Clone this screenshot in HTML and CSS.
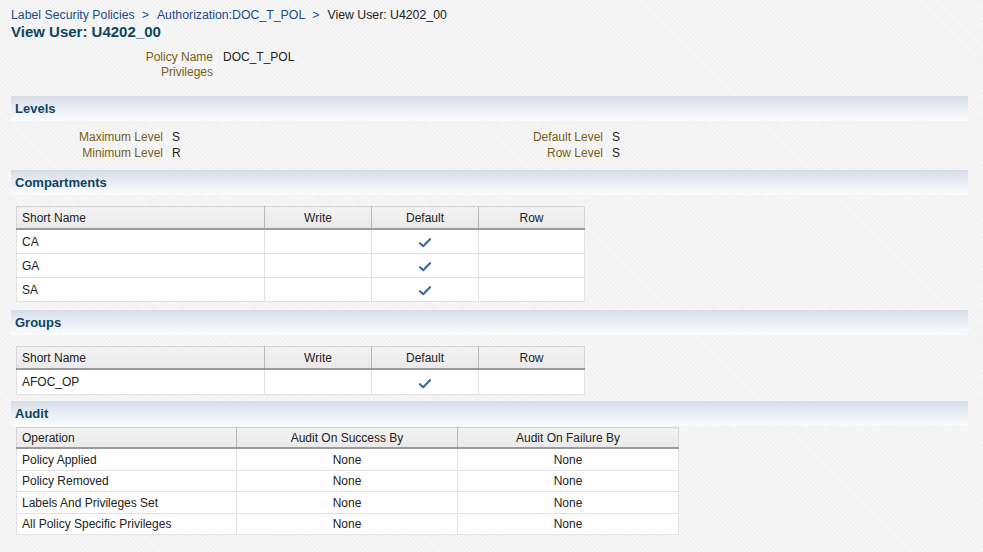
FILE: index.html
```html
<!DOCTYPE html>
<html>
<head>
<meta charset="utf-8">
<title>View User: U4202_00</title>
<link rel="stylesheet" href="styles.css">
</head>
<body>
<div class="page">
  <div class="crumbs">
    <a class="crumb-link" href="#">Label Security Policies</a><span class="sep">&gt;</span><a class="crumb-link" href="#">Authorization:DOC_T_POL</a><span class="sep">&gt;</span><span class="crumb-current">View User: U4202_00</span>
  </div>
  <h1 class="title">View User: U4202_00</h1>

  <div class="policy-form">
    <div class="label">Policy Name</div><div class="value">DOC_T_POL</div>
    <div class="label">Privileges</div><div class="value"></div>
  </div>

  <div class="section-header">Levels</div>
  <div class="levels">
    <div class="label">Maximum Level</div><div class="value">S</div>
    <div class="label">Default Level</div><div class="value">S</div>
    <div class="label">Minimum Level</div><div class="value">R</div>
    <div class="label">Row Level</div><div class="value">S</div>
  </div>

  <div class="section-header">Compartments</div>
  <table class="grid grid-comp">
    <colgroup><col class="c-name"><col class="c-flag"><col class="c-flag"><col class="c-row"></colgroup>
    <thead><tr><th class="left">Short Name</th><th>Write</th><th>Default</th><th>Row</th></tr></thead>
    <tbody>
      <tr><td>CA</td><td></td><td class="center"><svg class="check" width="12" height="10" viewBox="0 0 12 10"><path d="M1 5.2 L4.2 8.2 L11 1.2" fill="none" stroke="#3b6a9a" stroke-width="2.2" stroke-linecap="round" stroke-linejoin="round"/></svg></td><td></td></tr>
      <tr><td>GA</td><td></td><td class="center"><svg class="check" width="12" height="10" viewBox="0 0 12 10"><path d="M1 5.2 L4.2 8.2 L11 1.2" fill="none" stroke="#3b6a9a" stroke-width="2.2" stroke-linecap="round" stroke-linejoin="round"/></svg></td><td></td></tr>
      <tr><td>SA</td><td></td><td class="center"><svg class="check" width="12" height="10" viewBox="0 0 12 10"><path d="M1 5.2 L4.2 8.2 L11 1.2" fill="none" stroke="#3b6a9a" stroke-width="2.2" stroke-linecap="round" stroke-linejoin="round"/></svg></td><td></td></tr>
    </tbody>
  </table>

  <div class="section-header">Groups</div>
  <table class="grid grid-comp">
    <colgroup><col class="c-name"><col class="c-flag"><col class="c-flag"><col class="c-row"></colgroup>
    <thead><tr><th class="left">Short Name</th><th>Write</th><th>Default</th><th>Row</th></tr></thead>
    <tbody>
      <tr class="tall"><td>AFOC_OP</td><td></td><td class="center"><svg class="check" width="12" height="10" viewBox="0 0 12 10"><path d="M1 5.2 L4.2 8.2 L11 1.2" fill="none" stroke="#3b6a9a" stroke-width="2.2" stroke-linecap="round" stroke-linejoin="round"/></svg></td><td></td></tr>
    </tbody>
  </table>

  <div class="section-header section-audit">Audit</div>
  <table class="grid grid-audit">
    <colgroup><col class="c-op"><col class="c-aud"><col class="c-aud"></colgroup>
    <thead><tr><th class="left">Operation</th><th>Audit On Success By</th><th>Audit On Failure By</th></tr></thead>
    <tbody>
      <tr class="r22"><td>Policy Applied</td><td class="center">None</td><td class="center">None</td></tr>
      <tr><td>Policy Removed</td><td class="center">None</td><td class="center">None</td></tr>
      <tr class="r22"><td>Labels And Privileges Set</td><td class="center">None</td><td class="center">None</td></tr>
      <tr><td>All Policy Specific Privileges</td><td class="center">None</td><td class="center">None</td></tr>
    </tbody>
  </table>
</div>
</body>
</html>
```

FILE: styles.css
```css
html, body {
  margin: 0;
  padding: 0;
}
body {
  font-family: "Liberation Sans", Arial, sans-serif;
  font-size: 12px;
  color: #222;
  background-color: #f3f3f3;
  background-image: repeating-linear-gradient(45deg, #f2f2f2 0, #f2f2f2 2px, #f8f8f8 2px, #f8f8f8 3px);
  min-height: 552px;
}
.page {
  padding: 8px 15px 0 11px;
}
.crumbs {
  font-size: 12.3px;
  line-height: 15px;
  height: 15px;
}
.crumb-link {
  color: #1d4c8c;
  text-decoration: none;
}
.sep {
  color: #1d4c8c;
  margin: 0 8px 0 7px;
}
.crumb-current {
  color: #222;
}
.title {
  margin: 0;
  font-size: 15px;
  line-height: 17px;
  font-weight: bold;
  color: #0c4561;
}
.policy-form {
  display: grid;
  grid-template-columns: 202px auto;
  column-gap: 10px;
  margin-top: 10px;
  line-height: 15px;
}
.label {
  text-align: right;
  color: #765f17;
}
.value {
  color: #222;
}
.section-header {
  height: 25px;
  line-height: 25px;
  padding-left: 4px;
  font-size: 13px;
  font-weight: bold;
  color: #0c4561;
  background: linear-gradient(to bottom, #d6dce7 0%, #eaeef4 50%, #fbfcfd 100%);
  margin-top: 16px;
}
.levels {
  display: grid;
  grid-template-columns: 152px 277px 145px 1fr;
  column-gap: 9px;
  line-height: 16px;
  margin-top: 8px;
}
.levels + .section-header {
  margin-top: 9px;
}
.grid {
  border-collapse: collapse;
  margin-left: 5px;
  background: #fff;
  border: 1px solid #d6d6d6;
  table-layout: fixed;
}
.grid-comp {
  width: 568px;
  margin-top: 11px;
}
.grid-comp + .section-header {
  margin-top: 8px;
}
.grid-comp + .section-audit {
  margin-top: 6px;
}
.grid-audit {
  width: 663px;
  margin-top: 1px;
}
.c-name { width: 248px; }
.c-flag { width: 107px; }
.c-row { width: 106px; }
.c-op { width: 220px; }
.c-aud { width: 221px; }
.grid th {
  font-weight: normal;
  color: #222;
  height: 21px;
  padding: 0 5px;
  text-align: center;
  background: linear-gradient(to bottom, #f3f3f3, #e9e9e9);
  border-left: 1px solid #b9b9b9;
  border-bottom: 2px solid #9a9a9a;
}
.grid th:first-child {
  border-left: none;
}
.grid th.left {
  text-align: left;
}
.grid td {
  height: 23px;
  padding: 0 5px;
  border: 1px solid #e2e2e2;
  vertical-align: middle;
}
.grid-audit td {
  height: 20px;
}
.grid-audit tr.r22 td {
  height: 21px;
}
.grid-audit th {
  height: 19px;
}
.grid tr.tall td {
  height: 24px;
}
.grid td.center {
  text-align: center;
}
.check {
  display: inline-block;
  vertical-align: middle;
  margin-top: 2px;
}
```
